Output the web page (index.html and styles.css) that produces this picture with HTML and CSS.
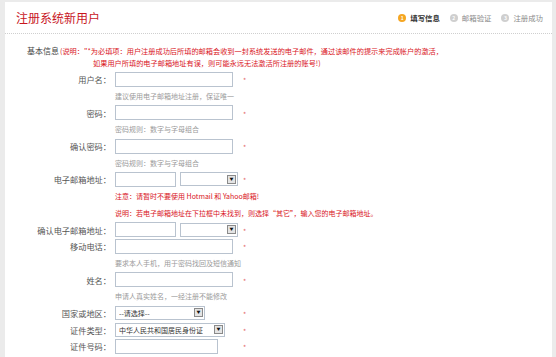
FILE: index.html
```html
<!DOCTYPE html>
<html lang="zh-CN">
<head>
<meta charset="utf-8">
<title>注册系统新用户</title>
<link rel="stylesheet" href="styles.css">
</head>
<body>
<div class="page">
  <div class="header">
    <h1 class="title">注册系统新用户</h1>
    <ol class="steps">
      <li class="step active"><span class="num">1</span>填写信息</li>
      <li class="step"><span class="num">2</span>邮箱验证</li>
      <li class="step"><span class="num">3</span>注册成功</li>
    </ol>
  </div>
  <div class="intro">
    <p class="intro-line"><span class="section">基本信息</span><span class="note">(说明："*为必填项：用户注册成功后所填的邮箱会收到一封系统发送的电子邮件，通过该邮件的提示来完成帐户的激活，</span></p>
    <p class="intro-line second note">如果用户所填的电子邮箱地址有误，则可能永远无法激活所注册的账号!)</p>
  </div>
  <div class="form">
    <div class="row"><span class="label">用户名：</span><div class="field"><span class="input w118"></span></div><span class="star">*</span></div>
    <div class="row"><span></span><div class="hint">建议使用电子邮箱地址注册，保证唯一</div></div>

    <div class="row"><span class="label">密码：</span><div class="field"><span class="input w118"></span></div><span class="star">*</span></div>
    <div class="row"><span></span><div class="hint">密码规则：数字与字母组合</div></div>

    <div class="row"><span class="label">确认密码：</span><div class="field"><span class="input w118"></span></div><span class="star">*</span></div>
    <div class="row"><span></span><div class="hint">密码规则：数字与字母组合</div></div>

    <div class="row"><span class="label">电子邮箱地址：</span><div class="field"><span class="input w61"></span><span class="select w57"><span class="select-text"></span><span class="arrow">▼</span></span></div><span class="star">*</span></div>
    <div class="row"><span></span><div class="warn">注意：请暂时不要使用 Hotmail 和 Yahoo邮箱!</div></div>
    <div class="row"><span></span><div class="warn">说明：若电子邮箱地址在下拉框中未找到，则选择“其它”，输入您的电子邮箱地址。</div></div>

    <div class="row"><span class="label">确认电子邮箱地址：</span><div class="field"><span class="input w61"></span><span class="select w57"><span class="select-text"></span><span class="arrow">▼</span></span></div><span class="star">*</span></div>

    <div class="row"><span class="label">移动电话：</span><div class="field"><span class="input w118"></span></div><span class="star">*</span></div>
    <div class="row"><span></span><div class="hint">要求本人手机，用于密码找回及短信通知</div></div>

    <div class="row"><span class="label">姓名：</span><div class="field"><span class="input w118"></span></div><span class="star">*</span></div>
    <div class="row"><span></span><div class="hint">申请人真实姓名，一经注册不能修改</div></div>

    <div class="row"><span class="label">国家或地区：</span><div class="field"><span class="select w88"><span class="select-text">--请选择--</span><span class="arrow">▼</span></span></div><span class="star">*</span></div>
    <div class="row"><span class="label">证件类型：</span><div class="field"><span class="select w108"><span class="select-text">中华人民共和国居民身份证</span><span class="arrow">▼</span></span></div><span class="star">*</span></div>
    <div class="row"><span class="label">证件号码：</span><div class="field"><span class="input w102"></span></div><span class="star">*</span></div>
  </div>
</div>
</body>
</html>
```

FILE: styles.css
```css
html, body {
  margin: 0;
  padding: 0;
}
body {
  background: #ebebeb;
  font-family: "Noto Sans CJK SC", "Liberation Sans", sans-serif;
  color: #555;
  height: 357px;
  overflow: hidden;
}
.page {
  margin: 2px 4px 0 5px;
  background: #fff;
  height: 355px;
}
.header {
  height: 31px;
  border-bottom: 1px dotted #cfcfcf;
  display: flex;
  align-items: center;
  justify-content: space-between;
  padding: 0 9px 0 11px;
}
.title {
  margin: 0;
  font-size: 12px;
  font-weight: normal;
  color: #c8161e;
  letter-spacing: 0;
}
.steps {
  list-style: none;
  margin: 0;
  padding: 0;
  display: flex;
  gap: 10px;
}
.step {
  display: flex;
  align-items: center;
  font-size: 7.4px;
  color: #8a8a8a;
}
.step.active {
  color: #333;
  font-weight: bold;
}
.num {
  width: 8px;
  height: 8px;
  border-radius: 50%;
  background: #cfcfcf;
  color: #fff;
  font-size: 5px;
  line-height: 8px;
  text-align: center;
  margin-right: 4px;
  font-weight: bold;
}
.step.active .num {
  background: #f5a623;
}
.intro {
  margin-top: 5px;
}
.intro-line {
  margin: 0;
  height: 16px;
  line-height: 16px;
  padding-left: 22px;
  white-space: nowrap;
}
.intro-line.second {
  padding-left: 88px;
}
.section {
  font-size: 8px;
  color: #444;
  margin-right: 1px;
}
.note {
  font-size: 7.2px;
  color: #d9141c;
}
.form {
  display: flex;
  flex-direction: column;
}
.row {
  display: grid;
  grid-template-columns: 110px 125px auto;
  height: 16.7px;
  align-items: center;
}
.label {
  text-align: right;
  padding-right: 4px;
  font-size: 8.2px;
  color: #555;
  white-space: nowrap;
}
.field {
  display: flex;
  align-items: center;
  gap: 4px;
}
.input {
  display: block;
  height: 13px;
  border: 1px solid #b9c3cf;
  background: #fff;
}
.w118 { width: 116px; }
.w61 { width: 59px; }
.w102 { width: 101px; }
.select {
  display: flex;
  align-items: center;
  justify-content: space-between;
  height: 12px;
  border: 1px solid #b9c3cf;
  background: #fff;
  padding: 0 1px 0 3px;
}
.w57 { width: 52px; }
.w88 { width: 84px; }
.w108 { width: 104px; }
.select-text {
  font-size: 7px;
  color: #333;
  white-space: nowrap;
  overflow: hidden;
}
.arrow {
  width: 7px;
  height: 7px;
  border: 1px solid #8a8a8a;
  background: #e4e4e4;
  font-size: 4px;
  line-height: 7px;
  text-align: center;
  color: #111;
  flex: none;
}
.star {
  padding-left: 3px;
  font-size: 7px;
  color: #e46a6a;
  line-height: 1;
  padding-top: 3px;
}
.hint, .warn {
  grid-column: 2 / 4;
  font-size: 7px;
  white-space: nowrap;
}
.hint {
  color: #9a9a9a;
}
.warn {
  color: #d9141c;
}
```
